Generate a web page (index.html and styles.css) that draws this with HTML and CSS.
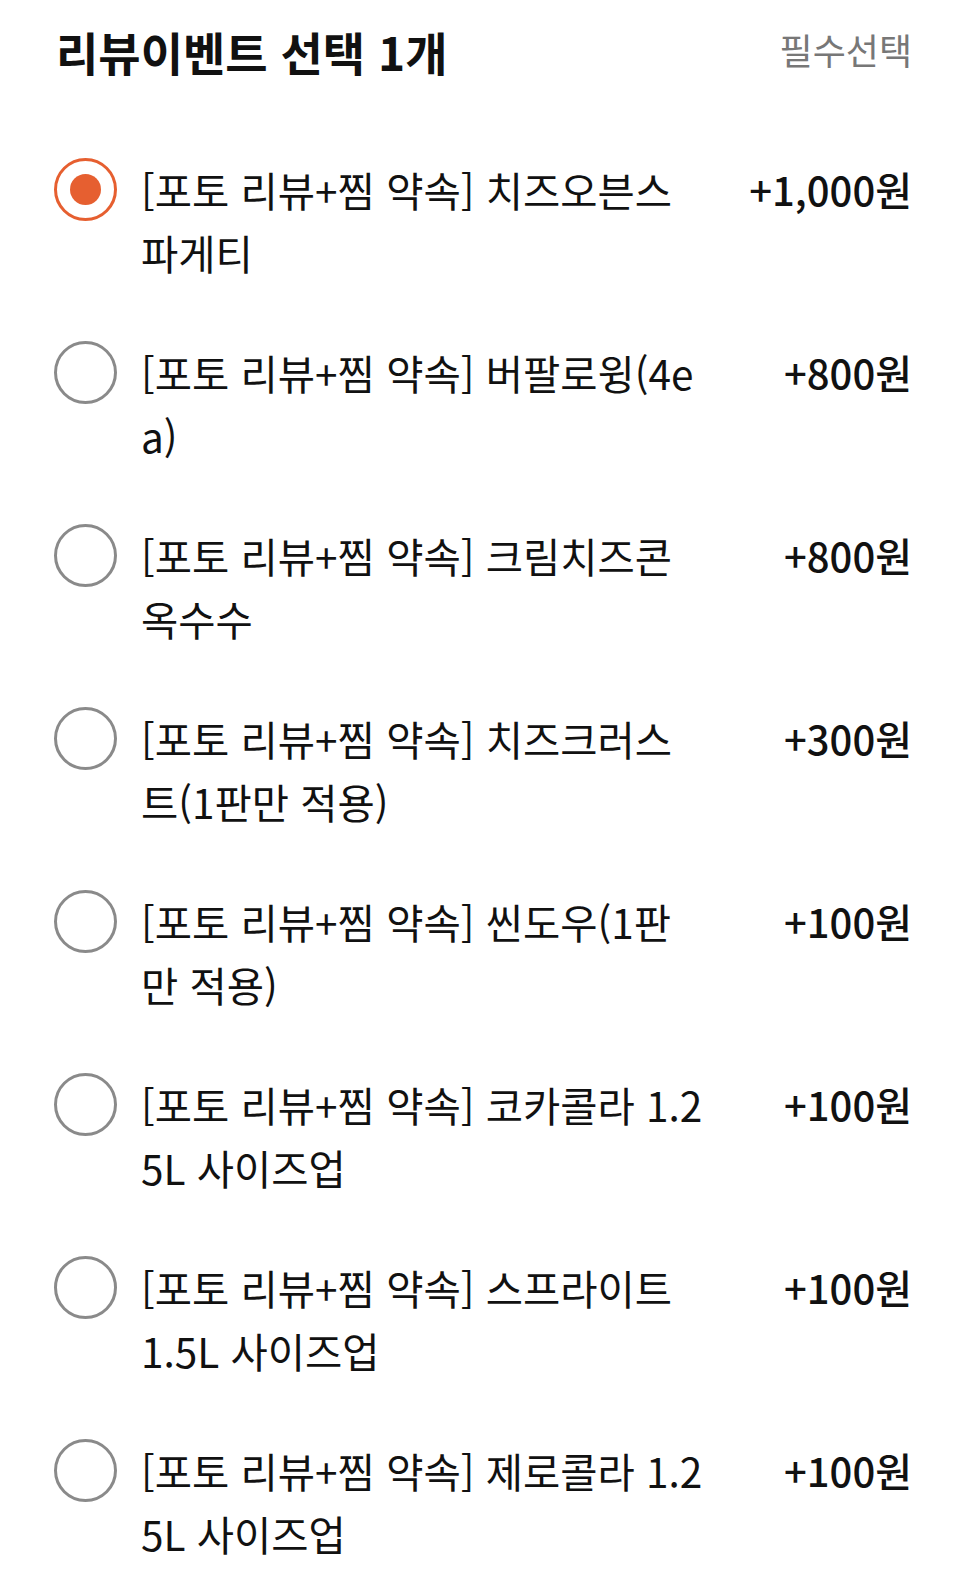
FILE: index.html
```html
<!DOCTYPE html>
<html lang="ko">
<head>
    <meta charset="UTF-8">
    <title>리뷰이벤트 선택</title>
    <meta name="viewport" content="width=device-width, initial-scale=1.0">
    <link rel="stylesheet" href="styles.css">
</head>
<body>
    <div class="option-group">
        <div class="group-header">
            <h2 class="group-title">리뷰이벤트 선택 1개</h2>
            <span class="group-badge">필수선택</span>
        </div>
        <ul class="option-list">
            <li class="option-row checked">
                <span class="radio"></span>
                <span class="option-name">[포토 리뷰+찜 약속] 치즈오븐스파게티</span>
                <span class="option-price">+1,000원</span>
            </li>
            <li class="option-row">
                <span class="radio"></span>
                <span class="option-name">[포토 리뷰+찜 약속] 버팔로윙(4ea)</span>
                <span class="option-price">+800원</span>
            </li>
            <li class="option-row">
                <span class="radio"></span>
                <span class="option-name">[포토 리뷰+찜 약속] 크림치즈콘옥수수</span>
                <span class="option-price">+800원</span>
            </li>
            <li class="option-row">
                <span class="radio"></span>
                <span class="option-name">[포토 리뷰+찜 약속] 치즈크러스트(1판만 적용)</span>
                <span class="option-price">+300원</span>
            </li>
            <li class="option-row">
                <span class="radio"></span>
                <span class="option-name">[포토 리뷰+찜 약속] 씬도우(1판만 적용)</span>
                <span class="option-price">+100원</span>
            </li>
            <li class="option-row">
                <span class="radio"></span>
                <span class="option-name">[포토 리뷰+찜 약속] 코카콜라 1.25L 사이즈업</span>
                <span class="option-price">+100원</span>
            </li>
            <li class="option-row">
                <span class="radio"></span>
                <span class="option-name">[포토 리뷰+찜 약속] 스프라이트 1.5L 사이즈업</span>
                <span class="option-price">+100원</span>
            </li>
            <li class="option-row">
                <span class="radio"></span>
                <span class="option-name">[포토 리뷰+찜 약속] 제로콜라 1.25L 사이즈업</span>
                <span class="option-price">+100원</span>
            </li>
        </ul>
    </div>
</body>
</html>
```

FILE: styles.css
```css
:root {
    --accent-color: #e65f30;
    --text-color: #111;
    --muted-color: #777;
    --radio-border: #8a8a8a;
}

body {
    margin: 0;
    background-color: white;
    color: var(--text-color);
    font-family: "Noto Sans CJK KR", "Noto Sans", sans-serif;
}

.option-group {
    padding: 17px 54px 0 54px;
}

.group-header {
    display: flex;
    justify-content: space-between;
    align-items: center;
    height: 68px;
}

.group-title {
    margin: 0;
    font-size: 46px;
    font-weight: 700;
    line-height: 68px;
    padding-left: 2px;
}

.group-badge {
    font-size: 36px;
    color: var(--muted-color);
    margin-top: -4px;
}

.option-list {
    list-style: none;
    margin: 45px 0 0;
    padding: 0;
}

.option-row {
    display: flex;
    align-items: flex-start;
    padding: 28px 0 29px;
    font-size: 40.5px;
    line-height: 63px;
}

.radio {
    flex-shrink: 0;
    width: 63px;
    height: 63px;
    box-sizing: border-box;
    border: 3px solid var(--radio-border);
    border-radius: 50%;
    display: flex;
    align-items: center;
    justify-content: center;
    margin-right: 24px;
}

.checked .radio {
    border-color: var(--accent-color);
}

.checked .radio::after {
    content: "";
    width: 31px;
    height: 31px;
    border-radius: 50%;
    background-color: var(--accent-color);
}

.option-name {
    flex: 1;
    word-break: break-all;
}

.option-price {
    flex-shrink: 0;
    width: 208px;
    text-align: right;
    font-size: 40px;
    font-weight: 500;
}
```
